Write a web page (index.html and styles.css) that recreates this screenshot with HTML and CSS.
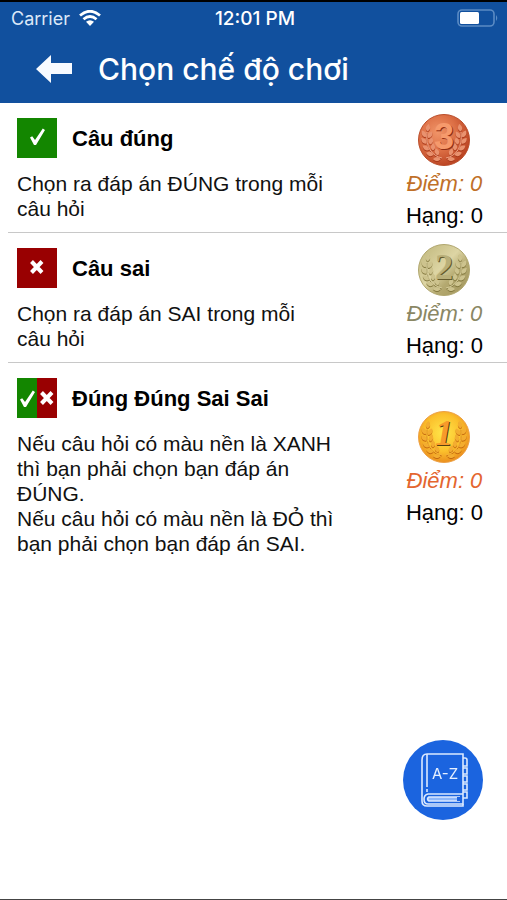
FILE: index.html
```
<!DOCTYPE html>
<html lang="vi">
<head>
  <meta charset="UTF-8" />
  <meta name="viewport" content="width=device-width, initial-scale=1.0" />
  <title>Chọn chế độ chơi</title>
  <link rel="stylesheet" href="styles.css">
</head>
<body>
  <!-- shared shapes: laurel wreath, tick, cross -->
  <svg class="defs" aria-hidden="true">
    <defs>
      <radialGradient id="bronze" cx="38%" cy="35%" r="70%">
        <stop offset="0" stop-color="#f09468" />
        <stop offset="0.5" stop-color="#dd7046" />
        <stop offset="1" stop-color="#b8401f" />
      </radialGradient>
      <linearGradient id="silver" x1="0" y1="0" x2="1" y2="1">
        <stop offset="0" stop-color="#bdb478" />
        <stop offset="0.45" stop-color="#ddd5a4" />
        <stop offset="0.65" stop-color="#b4a970" />
        <stop offset="1" stop-color="#a0935a" />
      </linearGradient>
      <radialGradient id="gold" cx="48%" cy="42%" r="60%">
        <stop offset="0" stop-color="#ffe64a" />
        <stop offset="0.6" stop-color="#fbc02c" />
        <stop offset="1" stop-color="#e98a1c" />
      </radialGradient>
      <path id="leaf" d="M0 3.6C-3 1.5 -2.6 -1.5 0 -4C2.6 -1.5 3 1.5 0 3.6Z" />
      <g id="branch">
        <path d="M24 44C14 42 7 33 9 18" fill="none" stroke="currentColor" stroke-width="1" />
        <use href="#leaf" transform="translate(10 14) rotate(10)" />
        <use href="#leaf" transform="translate(6 20) rotate(-28)" />
        <use href="#leaf" transform="translate(12 21) rotate(30)" />
        <use href="#leaf" transform="translate(6 27) rotate(-42)" />
        <use href="#leaf" transform="translate(13 27) rotate(16)" />
        <use href="#leaf" transform="translate(8 34) rotate(-56)" />
        <use href="#leaf" transform="translate(15 33) rotate(0)" />
        <use href="#leaf" transform="translate(12 40) rotate(-72)" />
        <use href="#leaf" transform="translate(19 38) rotate(-18)" />
        <use href="#leaf" transform="translate(19 45) rotate(-90)" />
      </g>
      <g id="wreath">
        <use href="#branch" />
        <use href="#branch" transform="translate(52 0) scale(-1 1)" />
      </g>
      <path id="tick" d="M1 9.5L3.2 8.2L6 12L13.8 0.4L16 2L7 17H5Z" />
      <path id="cross" d="M1.5 1.5L12 12.5M12 1.5L1.5 12.5" fill="none" stroke="#fff" stroke-width="4" />
    </defs>
  </svg>

  <header class="header">
    <div class="status">
      <div class="carrier">
        <span>Carrier</span>
        <svg width="22" height="16" viewBox="0 0 22 16" aria-hidden="true">
          <g fill="none" stroke="#fff" stroke-width="2.8">
            <path d="M1 5.5Q11 -3 21 5.5" />
            <path d="M4.5 9.3Q11 3.6 17.5 9.3" />
          </g>
          <path d="M7 11.8Q11 8.6 15 11.8L11 16Z" fill="#fff" />
        </svg>
      </div>
      <div class="time">12:01 PM</div>
      <div class="battery">
        <svg width="42" height="18" viewBox="0 0 42 18" aria-hidden="true">
          <rect x="1" y="1" width="36" height="16" rx="4" fill="none" stroke="#5b8bc4" stroke-width="1.6" />
          <rect x="3" y="3" width="19" height="12" rx="1.5" fill="#fff" />
          <path d="M39 6Q41.500 9 39 12Z" fill="#5b8bc4" />
        </svg>
      </div>
    </div>
    <div class="title-bar">
      <button class="back" type="button" aria-label="Quay lại">
        <svg width="36" height="28" viewBox="0 0 36 28" aria-hidden="true">
          <path d="M0 14L15 0V8H36V19H15V28Z" fill="#f7faff" />
        </svg>
      </button>
      <h1>Chọn chế độ chơi</h1>
    </div>
  </header>

  <main class="modes">
    <section class="mode">
      <div class="info">
        <div class="name">
          <svg class="mode-icon" viewBox="0 0 40 40" aria-hidden="true">
            <rect width="40" height="40" fill="#138600" />
            <use href="#tick" x="12" y="10" fill="#fff" />
          </svg>
          <h2>Câu đúng</h2>
        </div>
        <p>Chọn ra đáp án ĐÚNG trong mỗi câu&nbsp;hỏi</p>
      </div>
      <div class="score bronze">
        <svg class="medal" viewBox="0 0 52 52" aria-hidden="true">
          <circle cx="26" cy="26" r="25.500" fill="url(#bronze)" stroke="#ba4e2b" />
          <use href="#wreath" y="1" color="#a8391b" fill="#a8391b" />
          <use href="#wreath" color="#eda082" fill="#e9926f" />
          <text class="digit round" x="27" y="36" fill="#8d2d14">3</text>
          <text class="digit round" x="26" y="35" fill="#f69a6c">3</text>
        </svg>
        <div class="points">Điểm: 0</div>
        <div class="rank">Hạng: 0</div>
      </div>
    </section>

    <section class="mode">
      <div class="info">
        <div class="name">
          <svg class="mode-icon" viewBox="0 0 40 40" aria-hidden="true">
            <rect width="40" height="40" fill="#990001" />
            <use href="#cross" x="13" y="12" />
          </svg>
          <h2>Câu sai</h2>
        </div>
        <p>Chọn ra đáp án SAI trong mỗi câu&nbsp;hỏi</p>
      </div>
      <div class="score silver">
        <svg class="medal" viewBox="0 0 52 52" aria-hidden="true">
          <circle cx="26" cy="26" r="25.500" fill="url(#silver)" stroke="#b0a66e" />
          <use href="#wreath" y="1" color="#83783f" fill="#83783f" />
          <use href="#wreath" color="#d3ca98" fill="#cdc38e" />
          <text class="digit" x="27" y="36" fill="#655b2c">2</text>
          <text class="digit" x="26" y="35" fill="#b9af79">2</text>
        </svg>
        <div class="points">Điểm: 0</div>
        <div class="rank">Hạng: 0</div>
      </div>
    </section>

    <section class="mode">
      <div class="info">
        <div class="name">
          <svg class="mode-icon" viewBox="0 0 40 40" aria-hidden="true">
            <rect width="20" height="40" fill="#138600" />
            <rect x="20" width="20" height="40" fill="#990001" />
            <use href="#tick" x="2" y="12" fill="#fff" />
            <use href="#cross" x="23" y="13" />
          </svg>
          <h2>Đúng Đúng Sai Sai</h2>
        </div>
        <p>Nếu câu hỏi có màu nền là XANH thì bạn phải chọn bạn đáp án ĐÚNG.<br>Nếu câu hỏi có màu nền là ĐỎ thì bạn phải chọn bạn đáp án SAI.</p>
      </div>
      <div class="score gold">
        <svg class="medal" viewBox="0 0 52 52" aria-hidden="true">
          <circle cx="26" cy="26" r="25.500" fill="url(#gold)" stroke="#eda044" />
          <use href="#wreath" y="1" color="#c56a10" fill="#c56a10" />
          <use href="#wreath" color="#f5b436" fill="#f3ad30" />
          <text class="digit slanted" x="27" y="35" fill="#56400f">1</text>
          <text class="digit slanted" x="26" y="34" fill="#f79a2b">1</text>
        </svg>
        <div class="points">Điểm: 0</div>
        <div class="rank">Hạng: 0</div>
      </div>
    </section>
  </main>

  <button class="dictionary" type="button" aria-label="Từ điển">
    <svg width="80" height="80" viewBox="0 0 80 80" aria-hidden="true">
      <g fill="none" stroke="#dbe9ff" stroke-width="1.600">
        <path d="M60 54V14H24Q19 14 19 20V61Q19 66 24 66H60V64" />
        <path d="M24 14V47M24 49V52" />
        <path d="M60 54H25Q21 55 21 59Q21 64 25 64H60V54" />
        <path d="M57 57H26Q23 59 26 61H57" fill="#8db7fa" />
        <path d="M60 18H62Q64 18 64 20V26H60M60 28H64V34H60M60 36H64V42H60M60 44H64V50H60M60 52H64V58H60" />
      </g>
      <rect x="54" y="57" width="4" height="4" fill="#1d63df" />
      <text class="az" x="42" y="39">A-Z</text>
    </svg>
  </button>
</body>
</html>
```

FILE: styles.css
```
* {
  box-sizing: border-box;
}

body {
  margin: 0;
  min-height: 100vh;
  background-color: #fff;
  color: #111;
  font-family: 'Liberation Sans', Arial, sans-serif;
  font-size: 22px;
  line-height: 25px;
  border-bottom: 1px solid #444;
}

h1, h2, p {
  margin: 0;
}

button {
  padding: 0;
  border: none;
  cursor: pointer;
}

svg {
  display: block;
  flex-shrink: 0;
}

.defs {
  position: absolute;
  width: 0;
  height: 0;
}

.header {
  border-top: 2px solid #000;
  background-color: #11509e;
  color: #fff;
  font-family: Inter, Roboto, sans-serif;
}

.status {
  display: grid;
  grid-template-columns: 1fr auto 1fr;
  align-items: center;
  height: 32px;
  padding: 0 8px 0 11px;
  font-size: 18px;
}

.carrier {
  display: flex;
  align-items: center;
  gap: 9px;
  color: #dce8f8;
}

.time {
  font-size: 19px;
  font-weight: 500;
}

.battery {
  display: flex;
  justify-content: flex-end;
}

.title-bar {
  display: flex;
  align-items: center;
  gap: 26px;
  height: 69px;
  padding-left: 36px;
}

.back {
  background: none;
}

h1 {
  font-size: 30px;
  font-weight: 500;
  line-height: 40px;
}

.modes {
  padding-left: 8px;
}

.mode {
  display: flex;
  align-items: center;
  justify-content: space-between;
  padding: 15px 24px 11px 9px;
  border-bottom: 1px solid #c8c8c8;
}

.mode:last-child {
  border-bottom: none;
}

.info {
  display: flex;
  flex-direction: column;
  gap: 13px;
  max-width: 324px;
  font-size: 21px;
}

.name {
  display: flex;
  align-items: center;
  gap: 15px;
}

.mode-icon {
  width: 40px;
  height: 40px;
}

h2 {
  color: #000;
  font-size: 22px;
  line-height: 25px;
}

/* the medal column may be taller than the text beside it */
.score {
  display: flex;
  flex-direction: column;
  align-items: center;
  margin: -5px 0 -11px;
  line-height: 32px;
  white-space: nowrap;
}

.medal {
  width: 52px;
  height: 52px;
  margin-bottom: 2px;
}

.points {
  font-style: italic;
}

.bronze .points {
  color: #c07028;
}

.silver .points {
  color: #8a8764;
}

.gold .points {
  color: #e4662f;
}

.rank {
  color: #000;
}

.digit {
  font-family: 'Liberation Serif', serif;
  font-size: 36px;
  font-weight: bold;
  text-anchor: middle;
}

.round {
  font-family: 'Liberation Sans', sans-serif;
}

.slanted {
  font-style: italic;
}

.dictionary {
  position: fixed;
  right: 24px;
  bottom: 80px;
  border-radius: 50%;
  background-color: #1b64df;
}

.az {
  fill: #e6f0ff;
  font-family: Inter, sans-serif;
  font-size: 15px;
  text-anchor: middle;
}
```
